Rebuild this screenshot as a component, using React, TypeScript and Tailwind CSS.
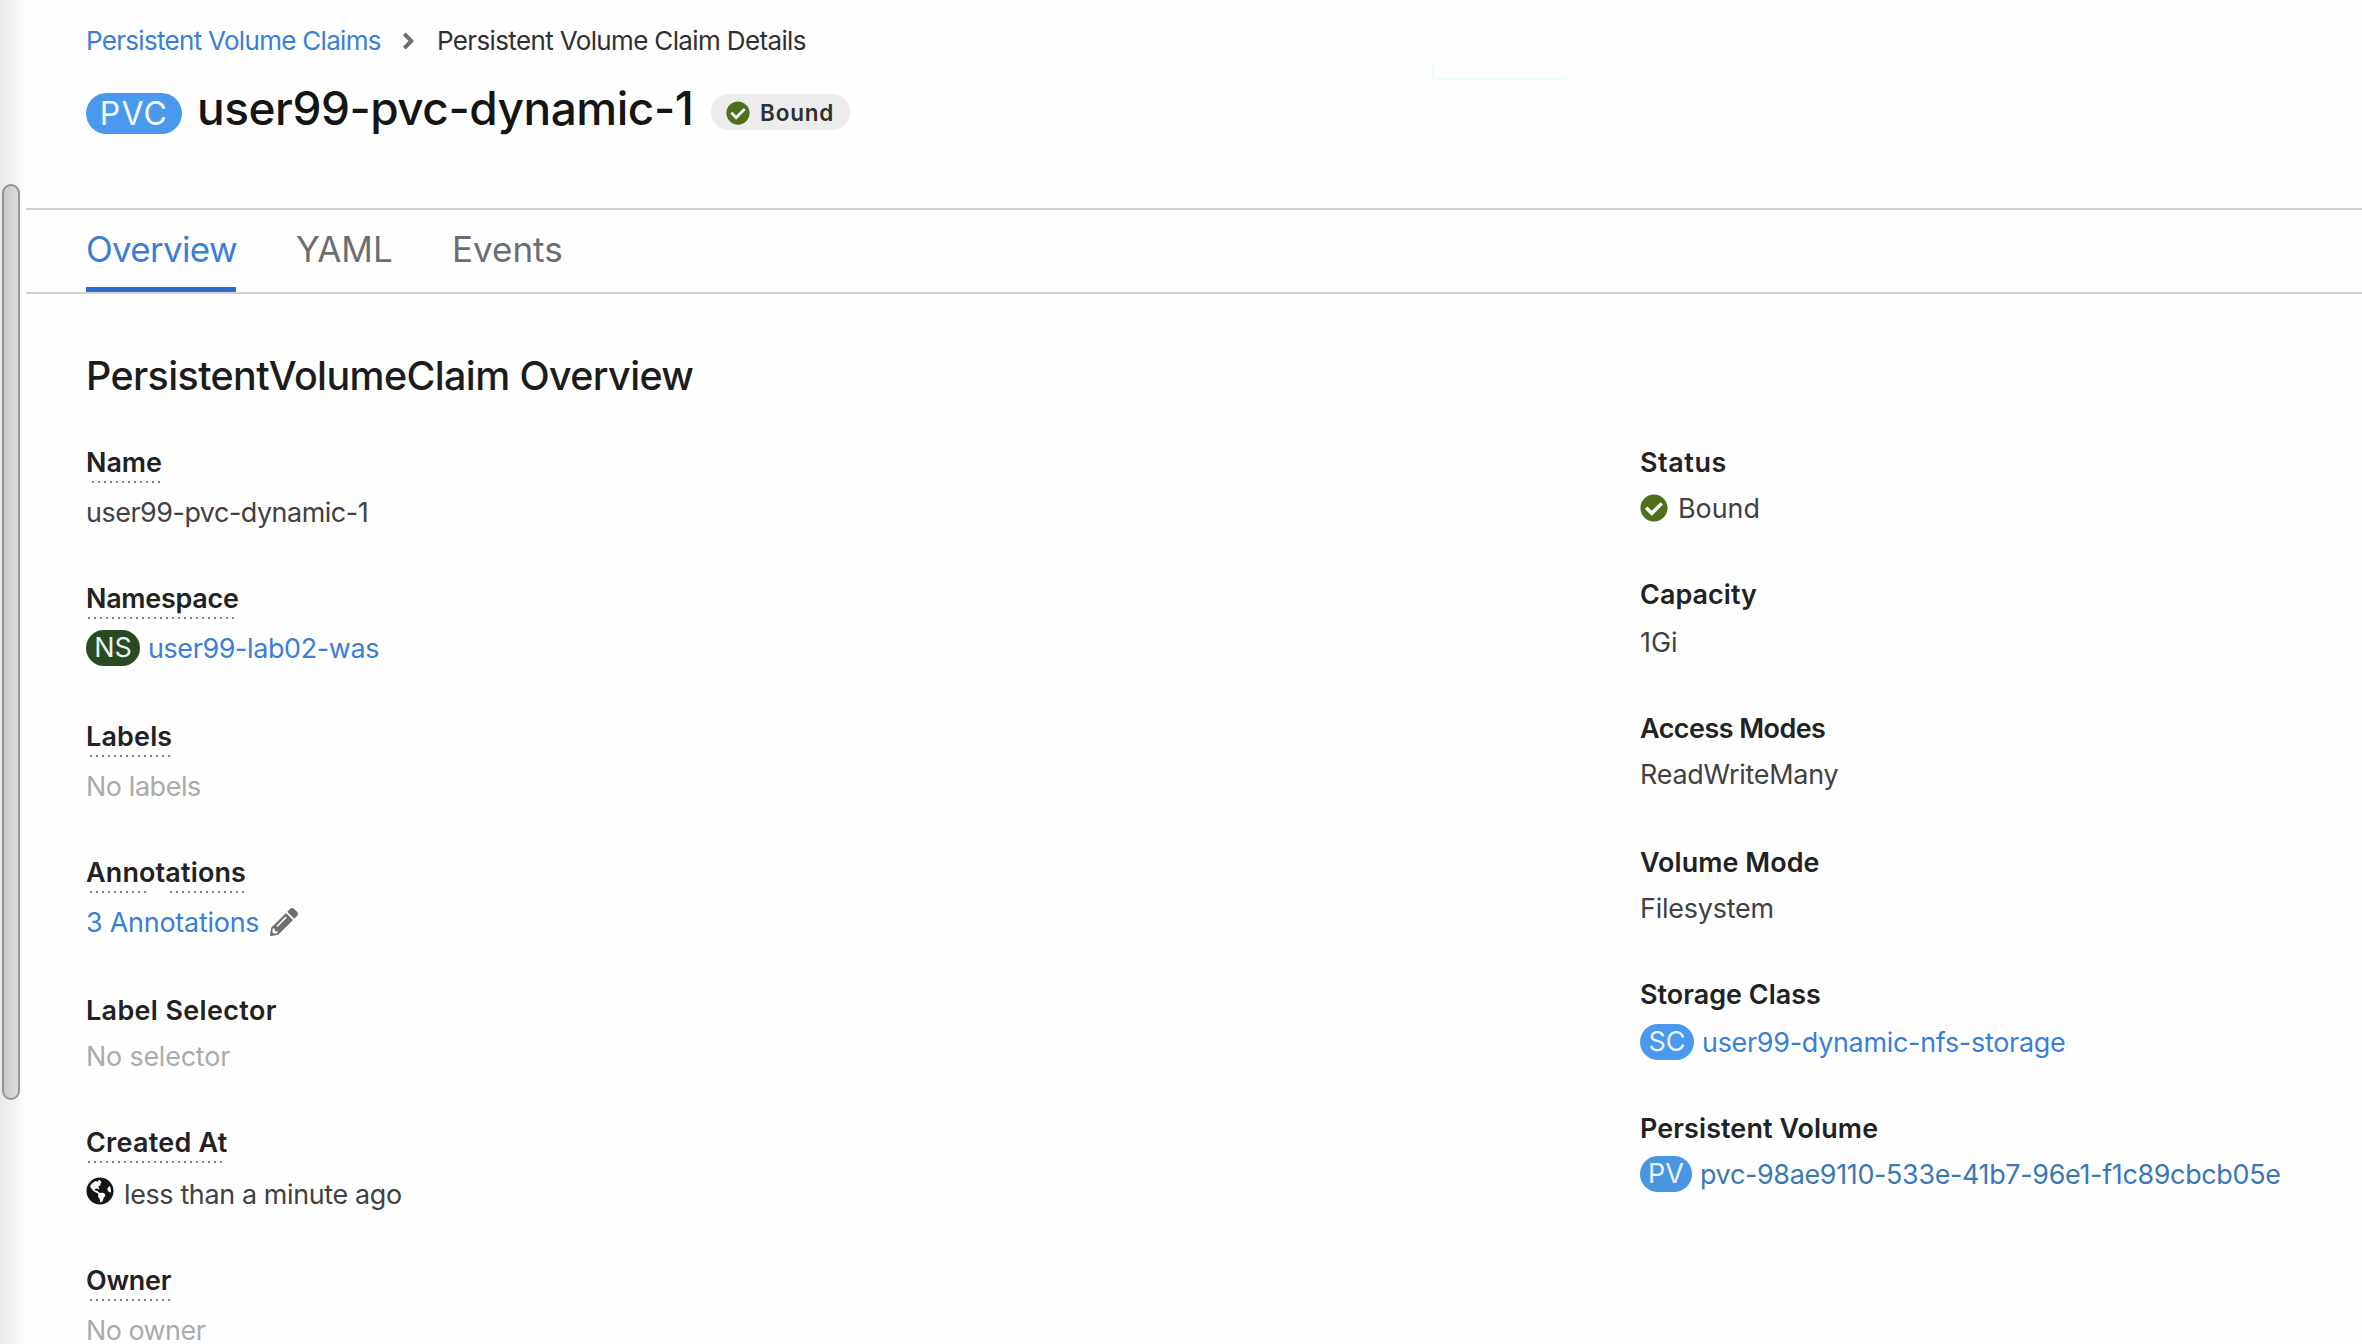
import type { ReactNode } from 'react';
import { FaAngleRight, FaCheckCircle, FaGlobeAmericas, FaPencilAlt } from 'react-icons/fa';

const dots =
  'h-[2px] bg-[repeating-linear-gradient(90deg,#808080_0_2px,transparent_2px_6px)]';

function Field({
  label,
  labelClass = '',
  underline,
  height,
  offset,
  children,
}: {
  label: string;
  labelClass?: string;
  underline?: ReactNode;
  height: string;
  offset: string;
  children: ReactNode;
}) {
  return (
    <div className={`flex flex-col items-start ${height}`}>
      <dt className={`flex flex-col ${offset}`}>
        <span className={`block h-[39px] font-semibold leading-10 text-[#222222] ${labelClass}`}>{label}</span>
        {underline}
      </dt>
      <dd className="flex h-10 items-center leading-10">{children}</dd>
    </div>
  );
}

function ResourceBadge({ text, className }: { text: string; className: string }) {
  return (
    <span
      className={`flex h-9 items-center justify-center rounded-full text-[27px] leading-9 text-[#e9f1f8] ${className}`}
    >
      {text}
    </span>
  );
}

const link = 'text-[#3a7fd5]';

export default function App() {
  return (
    <div className="flex h-[1344px] w-[2362px] overflow-hidden bg-[#fefefe] font-['Inter',sans-serif] text-[26.9px] text-[#414141]">
      {/* Scroll track */}
      <div className="w-[26px] shrink-0 bg-linear-to-r from-[#e8e8e8] to-[#fefefe] pt-[184px] pl-[2px]">
        <div className="h-[916px] w-[18px] rounded-full border-2 border-[#959595] bg-linear-to-r from-[#cbcbcb] to-[#dcdcdc]" />
      </div>

      <main className="flex min-w-0 grow flex-col">
        <header className="relative h-[208px] shrink-0 pt-[21px] pl-[60px]">
          <nav className="flex h-10 items-center whitespace-nowrap text-[26px] leading-10">
            <span className={`w-[316px] tracking-[-0.7px] ${link}`}>Persistent Volume Claims</span>
            <FaAngleRight className="h-[26px] w-[13px] text-[#6a6e73]" />
            <span className="ml-[22px] tracking-[-0.64px] text-[#303030]">Persistent Volume Claim Details</span>
          </nav>
          <div className="mt-[17px] flex h-[60px] items-start whitespace-nowrap">
            <span className="mt-[15px] flex h-[41px] w-24 items-center justify-center rounded-full bg-[#4a99ec] text-[32px] tracking-[1.2px] text-[#f5f9ff]">
              PVC
            </span>
            <h1 className="ml-[15px] w-[514px] text-[46px] font-medium leading-[60px] tracking-[-0.47px] text-[#151515]">
              user99-pvc-dynamic-1
            </h1>
            <span className="mt-4 flex h-9 w-[139px] items-center rounded-full bg-[#ececec] pt-[2px] pl-[15px] text-[22.5px] font-semibold tracking-[0.8px] text-[#2f2f2f]">
              <FaCheckCircle className="mr-[10px] size-6 text-[#4f6f1a]" />
              Bound
            </span>
          </div>
          <div className="absolute top-[60px] left-[1406px] h-[20px] w-[136px] rounded-sm border-b-2 border-l-2 border-[#e9ffff]" />
        </header>

        <div className="flex h-[86px] shrink-0 gap-[60px] border-y-2 border-[#d2d2d2] pl-[60px] text-[35px] leading-[78px] text-[#6a6e73]">
          <div className={`w-[150px] border-b-[5px] border-[#2b6dcc] tracking-[-0.7px] ${link}`}>Overview</div>
          <div className="w-24">YAML</div>
          <div>Events</div>
        </div>

        <section className="pt-[52px] pl-[60px]">
          <h2 className="text-[39.4px] font-medium leading-[60px] tracking-[-0.6px] text-[#1c1c1c]">
            PersistentVolumeClaim Overview
          </h2>
          <div className="mt-9 flex whitespace-nowrap">
            <dl className="w-[1554px]">
              <Field label="Name" height="h-[136px]" offset="h-[50px]" underline={<span className={`ml-[6px] w-[70px] ${dots}`} />}>
                <span className="tracking-[-0.46px]">user99-pvc-dynamic-1</span>
              </Field>
              <Field label="Namespace" labelClass="tracking-[-0.25px]" height="h-[138px]" offset="h-[50px]" underline={<span className={`ml-[2px] w-[147px] ${dots}`} />}>
                <ResourceBadge text="NS" className="w-[54px] bg-[#2a4b20]" />
                <span className={`ml-2 tracking-[-0.36px] ${link}`}>user99-lab02-was</span>
              </Field>
              <Field label="Labels" height="h-[136px]" labelClass="tracking-[0.2px]" offset="h-[50px]" underline={<span className={`ml-[4px] w-[80px] ${dots}`} />}>
                <span className="tracking-[-0.39px] text-[#ababab]">No labels</span>
              </Field>
              <Field
                label="Annotations"
                labelClass="tracking-[0.18px]"
                height="h-[138px]"
                offset="h-[50px]"
                underline={
                  <span className="flex gap-[22px]">
                    <span className={`ml-[4px] w-[58px] ${dots}`} />
                    <span className={`w-[74px] ${dots}`} />
                  </span>
                }
              >
                <span className={`w-[184px] tracking-[-0.22px] ${link}`}>3 Annotations</span>
                <FaPencilAlt className="size-7 text-[#6d7073]" />
              </Field>
              <Field label="Label Selector" height="h-[132px]" labelClass="tracking-[0.38px]" offset="h-[46px]">
                <span className="tracking-[-0.19px] text-[#ababab]">No selector</span>
              </Field>
              <Field label="Created At" height="h-[138px]" labelClass="tracking-[0.3px]" offset="h-[52px]" underline={<span className={`ml-[2px] w-[136px] ${dots}`} />}>
                <FaGlobeAmericas className="mr-[10px] mb-[7px] size-7 text-[#151515]" />
                <span className="tracking-[-0.35px]">less than a minute ago</span>
              </Field>
              <Field label="Owner" height="h-[90px]" labelClass="tracking-[-0.2px]" offset="h-[50px]" underline={<span className={`ml-[4px] w-[80px] ${dots}`} />}>
                <span className="tracking-[-0.5px] text-[#ababab]">No owner</span>
              </Field>
            </dl>

            <dl>
              <Field label="Status" labelClass="tracking-[0.6px]" height="h-[132px]" offset="h-[46px]">
                <FaCheckCircle className="mr-[10px] size-7 text-[#4f6f1a]" />
                <span>Bound</span>
              </Field>
              <Field label="Capacity" labelClass="tracking-[0.08px]" height="h-[134px]" offset="h-[48px]">
                <span>1Gi</span>
              </Field>
              <Field label="Access Modes" labelClass="tracking-[-0.5px]" height="h-[134px]" offset="h-[46px]">
                <span className="tracking-[-0.22px]">ReadWriteMany</span>
              </Field>
              <Field label="Volume Mode" labelClass="tracking-[0.08px]" height="h-[132px]" offset="h-[46px]">
                <span className="tracking-[-0.2px]">Filesystem</span>
              </Field>
              <Field label="Storage Class" labelClass="tracking-[0.05px]" height="h-[134px]" offset="h-[48px]">
                <ResourceBadge text="SC" className="w-[54px] bg-[#4a99ec]" />
                <span className={`ml-2 tracking-[-0.26px] ${link}`}>user99-dynamic-nfs-storage</span>
              </Field>
              <Field label="Persistent Volume" labelClass="tracking-[0.12px]" height="h-[90px]" offset="h-[46px]">
                <ResourceBadge text="PV" className="w-[52px] bg-[#4a95e2]" />
                <span className="ml-2 tracking-[-0.32px] text-[#3a78b4]">pvc-98ae9110-533e-41b7-96e1-f1c89cbcb05e</span>
              </Field>
            </dl>
          </div>
        </section>
      </main>
    </div>
  );
}
